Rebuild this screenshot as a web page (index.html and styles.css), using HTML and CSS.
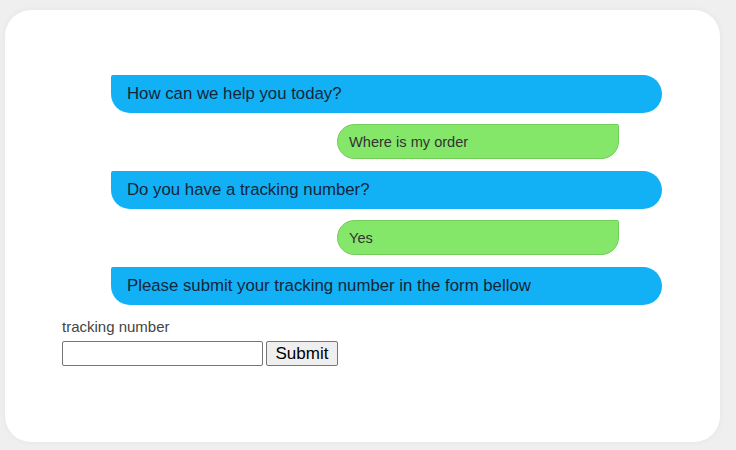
FILE: index.html
```html
<!DOCTYPE html>
<html>
<head>
<meta charset="utf-8">
<link rel="stylesheet" href="styles.css">
</head>
<body>
<div class="card">
  <div class="chat">
    <div class="bubble bot">How can we help you today?</div>
    <div class="bubble user">Where is my order</div>
    <div class="bubble bot">Do you have a tracking number?</div>
    <div class="bubble user">Yes</div>
    <div class="bubble bot">Please submit your tracking number in the form bellow</div>
  </div>
  <form class="form">
    <label class="label" for="tn">tracking number</label>
    <div class="row">
      <input id="tn" class="input" type="text">
      <button class="btn" type="button">Submit</button>
    </div>
  </form>
</div>
</body>
</html>
```
FILE: styles.css
```css
html, body {
  margin: 0;
  padding: 0;
  background: #efefef;
  font-family: "Liberation Sans", Arial, sans-serif;
}
body {
  padding: 10px 16px 8px 5px;
  width: 736px;
  height: 450px;
  box-sizing: border-box;
}
.card {
  background: #ffffff;
  border-radius: 26px;
  width: 715px;
  height: 432px;
  box-sizing: border-box;
  padding: 65px 0 0 57px;
  box-shadow: 0 0 6px rgba(0,0,0,0.05);
}
.chat {
  display: flex;
  flex-direction: column;
  padding-left: 49px;
  width: 551px;
}
.bubble {
  display: flex;
  align-items: center;
  box-sizing: border-box;
}
.bot {
  background: #12b1f5;
  color: #14263a;
  height: 38px;
  width: 551px;
  font-size: 16.8px;
  padding-left: 16px;
  border-radius: 2px 20px 20px 20px;
}
.user {
  background: #85e76a;
  border: 1px solid #72cc58;
  color: #333333;
  height: 35px;
  width: 282px;
  margin-left: 226px;
  font-size: 14.6px;
  padding-left: 11px;
  border-radius: 20px 2px 20px 20px;
  margin-top: 11px;
  margin-bottom: 12px;
}
.form {
  margin-top: 12px;
}
.label {
  display: block;
  font-size: 15px;
  color: #444444;
  line-height: 20px;
  margin-bottom: 4px;
}
.row {
  display: flex;
  gap: 3px;
}
.input {
  width: 201px;
  height: 25px;
  box-sizing: border-box;
  border: 1px solid #767676;
  border-radius: 2px;
  margin: 0;
  padding: 1px 2px;
}
.btn {
  width: 72px;
  height: 25px;
  box-sizing: border-box;
  margin: 0;
  padding: 0;
  font-family: "Liberation Sans", Arial, sans-serif;
  font-size: 17px;
  color: #000;
  background: #efefef;
  border: 1px solid #767676;
  border-radius: 2px;
}
```
